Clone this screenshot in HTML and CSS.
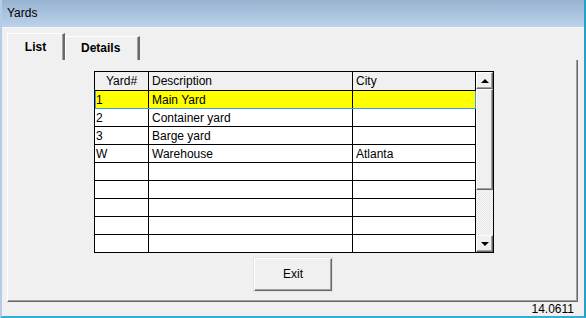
FILE: index.html
```html
<!DOCTYPE html>
<html lang="en">
<head>
    <meta charset="UTF-8">
    <title>Yards</title>
    <link rel="stylesheet" href="styles.css">
</head>
<body>
    <div class="window">
        <div class="titlebar">Yards</div>

        <div class="client">
            <!-- Schede -->
            <div class="tabs">
                <div class="tab active">List</div>
                <div class="tab">Details</div>
            </div>

            <div class="panel">
                <div class="grid">
                    <div class="rows">
                        <div class="row head">
                            <div class="cell c1 center">Yard#</div>
                            <div class="cell c2">Description</div>
                            <div class="cell c3">City</div>
                        </div>
                        <div class="row selected">
                            <div class="cell c1">1</div>
                            <div class="cell c2">Main Yard</div>
                            <div class="cell c3"></div>
                        </div>
                        <div class="row">
                            <div class="cell c1">2</div>
                            <div class="cell c2">Container yard</div>
                            <div class="cell c3"></div>
                        </div>
                        <div class="row">
                            <div class="cell c1">3</div>
                            <div class="cell c2">Barge yard</div>
                            <div class="cell c3"></div>
                        </div>
                        <div class="row">
                            <div class="cell c1">W</div>
                            <div class="cell c2">Warehouse</div>
                            <div class="cell c3">Atlanta</div>
                        </div>
                        <div class="row"><div class="cell c1"></div><div class="cell c2"></div><div class="cell c3"></div></div>
                        <div class="row"><div class="cell c1"></div><div class="cell c2"></div><div class="cell c3"></div></div>
                        <div class="row"><div class="cell c1"></div><div class="cell c2"></div><div class="cell c3"></div></div>
                        <div class="row"><div class="cell c1"></div><div class="cell c2"></div><div class="cell c3"></div></div>
                        <div class="row last"><div class="cell c1"></div><div class="cell c2"></div><div class="cell c3"></div></div>
                    </div>

                    <!-- Barra di scorrimento -->
                    <div class="scrollbar">
                        <div class="sb-btn"><span class="arrow-up"></span></div>
                        <div class="sb-thumb"></div>
                        <div class="sb-track"></div>
                        <div class="sb-btn"><span class="arrow-down"></span></div>
                    </div>
                </div>

                <div class="btn">Exit</div>
            </div>
        </div>

        <div class="status">14.0611</div>
    </div>
</body>
</html>
```

FILE: styles.css
```css
body {
    margin: 0;
    width: 586px;
    height: 318px;
    overflow: hidden;
    font-family: 'Liberation Sans', Arial, sans-serif;
    font-size: 12px;
    color: #000;
}

.window {
    box-sizing: border-box;
    width: 586px;
    height: 318px;
    display: flex;
    flex-direction: column;
    background: #f0f0f0;
    border-left: 2px solid #b4cce6;
    border-right: 2px solid #2b9dc9;
    border-bottom: 2px solid #34aed8;
}

.titlebar {
    height: 27px;
    line-height: 27px;
    padding-left: 5px;
    background: linear-gradient(to bottom, #97b3d1, #bcd2ea);
    border-bottom: 1px solid #f7f7f7;
    color: #000;
    flex-shrink: 0;
}

.client {
    padding: 0 6px 0 5px;
}

.tabs {
    display: flex;
    align-items: flex-end;
    height: 32px;
}

.tab {
    box-sizing: border-box;
    height: 24px;
    line-height: 23px;
    padding: 0 18px 0 15px;
    font-weight: bold;
    border-top: 1px solid #fff;
    border-left: 1px solid #fff;
    border-right: 2px solid #696969;
    box-shadow: inset -1px 0 #a0a0a0;
}

.tab.active {
    height: 27px;
    line-height: 27px;
    width: 58px;
    padding: 0;
    text-align: center;
}

.panel {
    box-sizing: border-box;
    width: 571px;
    height: 242px;
    padding: 11px 0 0 86px;
    border-left: 1px solid #fff;
    border-right: 1px solid #696969;
    border-bottom: 1px solid #696969;
    box-shadow: inset -1px -1px #a0a0a0;
}

.grid {
    display: flex;
    width: 398px;
    border: 1px solid #000;
    background: #fff;
}

.rows {
    width: 381px;
}

.row {
    display: flex;
    box-sizing: border-box;
    height: 18px;
    border-bottom: 1px solid #000;
}

.row.head {
    height: 19px;
    background: #f0f0f0;
}

.row.last {
    height: 17px;
    border-bottom: none;
}

.row.selected {
    background: #ffff00;
    border-bottom-color: #3399ff;
    box-shadow: inset 1px 0 #3399ff;
}

.row.selected .c3 {
    border-right-color: #3399ff;
}

.cell {
    box-sizing: border-box;
    border-right: 1px solid #000;
    padding-left: 3px;
    line-height: 18px;
    white-space: nowrap;
}

.c1 {
    width: 54px;
    padding-left: 1px;
}

.c2 {
    width: 204px;
}

.c3 {
    width: 123px;
}

.center {
    text-align: center;
    padding-left: 0;
}

.scrollbar {
    width: 17px;
    display: flex;
    flex-direction: column;
    background: #f0f0f0;
}

.sb-btn,
.sb-thumb {
    box-sizing: border-box;
    background: #f0f0f0;
    border-top: 1px solid #fff;
    border-left: 1px solid #fff;
    border-right: 1px solid #696969;
    border-bottom: 1px solid #696969;
    box-shadow: inset -1px -1px #a0a0a0;
}

.sb-btn {
    height: 17px;
    display: flex;
    justify-content: center;
    align-items: center;
}

.sb-thumb {
    height: 101px;
}

.sb-track {
    flex: 1;
    background: repeating-conic-gradient(#fafafa 0 25%, #e4e4e4 0 50%) 0 0 / 2px 2px;
}

.arrow-up {
    width: 0;
    height: 0;
    border-left: 4px solid transparent;
    border-right: 4px solid transparent;
    border-bottom: 4px solid #000;
}

.arrow-down {
    width: 0;
    height: 0;
    border-left: 4px solid transparent;
    border-right: 4px solid transparent;
    border-top: 4px solid #000;
}

.btn {
    box-sizing: border-box;
    width: 78px;
    height: 33px;
    margin: 5px 0 0 160px;
    line-height: 31px;
    text-align: center;
    background: #f0f0f0;
    border-top: 1px solid #fff;
    border-left: 1px solid #fff;
    border-right: 1px solid #696969;
    border-bottom: 1px solid #696969;
    box-shadow: inset -1px -1px #a0a0a0, 0 0 0 1px #e3e3e3;
}

.status {
    flex: 1;
    text-align: right;
    padding-right: 10px;
    line-height: 15px;
}
```
